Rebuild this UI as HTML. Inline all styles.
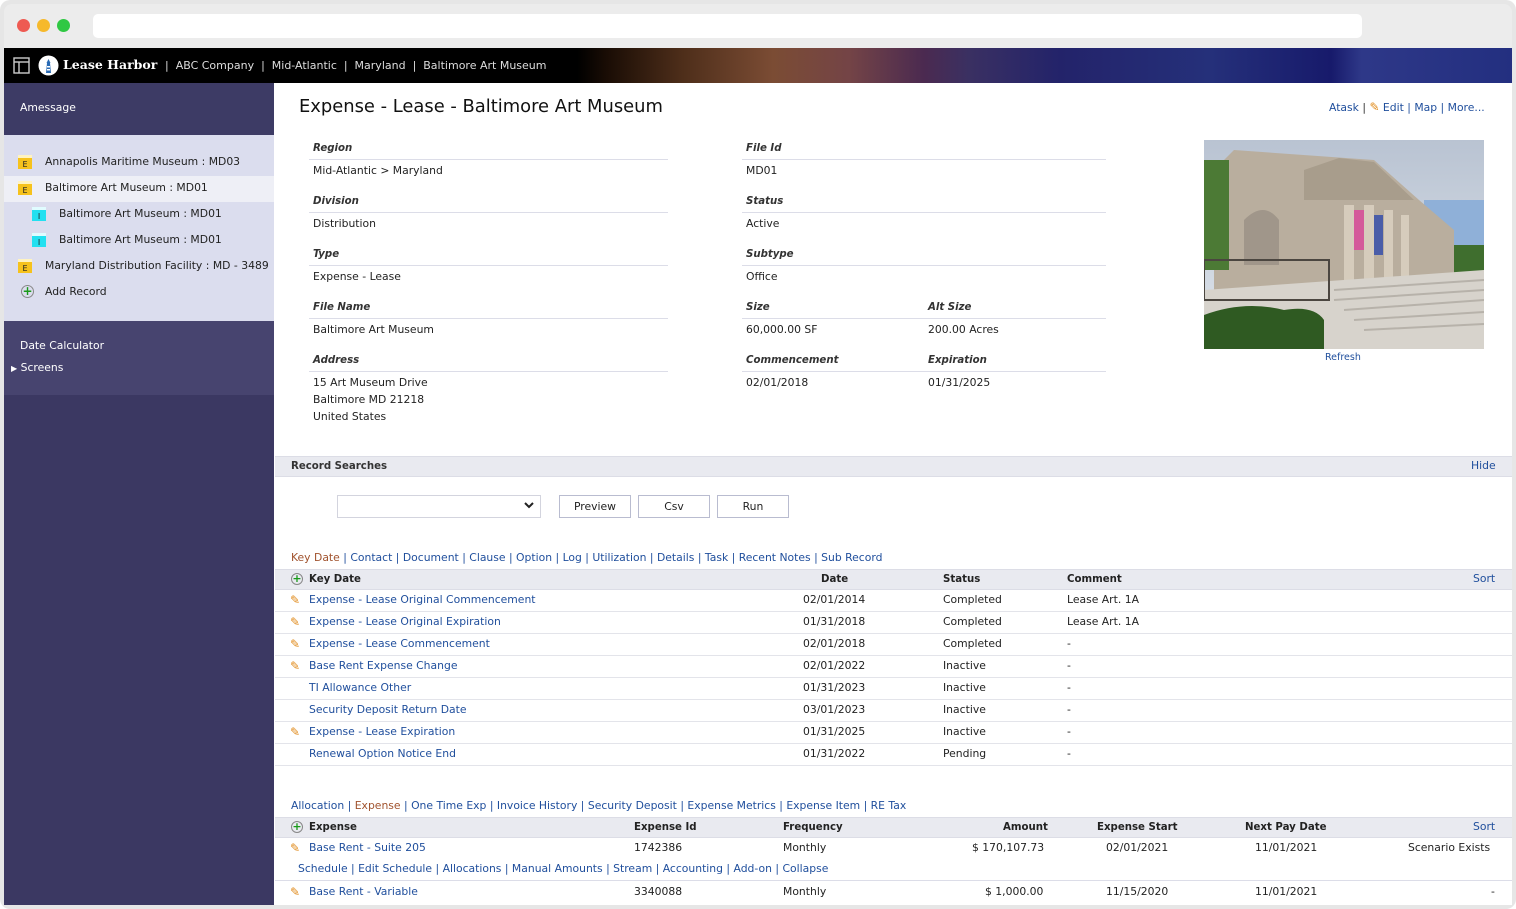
<!DOCTYPE html>
<html><head><meta charset="utf-8"><style>
*{margin:0;padding:0;box-sizing:border-box}
body{width:1516px;height:909px;background:#fff;font-family:"DejaVu Sans","Liberation Sans",sans-serif;font-size:10.8px;color:#222;position:relative;overflow:hidden}
.a{position:absolute;white-space:nowrap;line-height:16px}
.l{color:#1f4e9c}
.o{color:#a0522d}
.lbl{font-weight:bold;font-style:italic;font-size:10.2px;color:#333}
.hr{position:absolute;height:1px;background:#dcdde8}
.gbar{position:absolute;left:275px;width:1237px;background:#e9eaf0;border-top:1px solid #dcdde6;border-bottom:1px solid #dcdde6}
.row{position:absolute;left:275px;width:1237px;height:22px;border-bottom:1px solid #e3e4ea}
.btn{position:absolute;top:495px;height:23px;border:1px solid #b9bcd0;background:#fff;text-align:center;line-height:21px}
.pen{color:#e08a1a;font-size:12px}
</style></head><body>
<div class="a" style="left:0;top:0;width:1516px;height:909px;background:#e6e6e6;border-radius:10px"></div>
<div class="a" style="left:4px;top:4px;width:1508px;height:44px;background:#ececec;border-radius:8px 8px 0 0"></div>
<div class="a" style="left:274px;top:83px;width:1238px;height:822px;background:#fff"></div>
<div class="a" style="left:17px;top:19px;width:13px;height:13px;border-radius:50%;background:#ee5a52"></div>
<div class="a" style="left:37px;top:19px;width:13px;height:13px;border-radius:50%;background:#f6b92c"></div>
<div class="a" style="left:57px;top:19px;width:13px;height:13px;border-radius:50%;background:#2fc843"></div>
<div class="a" style="left:93px;top:14px;width:1269px;height:24px;background:#fff;border-radius:5px"></div>
<!-- header -->
<div class="a" style="left:4px;top:48px;width:1508px;height:35px;background:linear-gradient(90deg,#000 0%,#000 38%,#1a0d05 40%,#4e2e1a 45%,#7b4c34 51%,#744446 56%,#4b2a50 61%,#3a3062 64%,#23236a 70%,#25307a 80%,#171a6b 88%,#2e3888 90%,#232f80 100%)"></div>
<svg class="a" style="left:13px;top:57px" width="17" height="17" viewBox="0 0 17 17"><rect x="1" y="1" width="15" height="15" fill="none" stroke="#ccc" stroke-width="1.4"/><line x1="1" y1="5" x2="16" y2="5" stroke="#ccc" stroke-width="1.4"/><line x1="6" y1="5" x2="6" y2="16" stroke="#ccc" stroke-width="1.4"/></svg>
<svg class="a" style="left:38px;top:55px" width="21" height="21" viewBox="0 0 21 21"><circle cx="10.5" cy="10.5" r="10" fill="#fff"/><path d="M8 18 L9 8 L12 8 L13 18 Z M8.5 8 L10.5 4 L12.5 8 Z" fill="#2a6bb5"/><rect x="9" y="11" width="3" height="1.5" fill="#fff"/><rect x="9" y="14" width="3" height="1.5" fill="#fff"/></svg>
<div class="a" style="left:63px;top:57px;color:#fff;font-family:'DejaVu Serif',serif;font-weight:bold;font-size:12.5px">Lease Harbor</div>
<div class="a" style="left:165px;top:58px;color:#ddd;font-size:11px">|&nbsp;&nbsp;ABC Company&nbsp;&nbsp;|&nbsp;&nbsp;Mid-Atlantic&nbsp;&nbsp;|&nbsp;&nbsp;Maryland&nbsp;&nbsp;|&nbsp;&nbsp;Baltimore Art Museum</div>
<!-- sidebar -->
<div class="a" style="left:4px;top:83px;width:270px;height:822px;background:#3b3862"></div>
<div class="a" style="left:4px;top:83px;width:270px;height:52px;background:#3d3b65"></div>
<div class="a" style="left:20px;top:100px;color:#fff">Amessage</div>
<div class="a" style="left:4px;top:135px;width:270px;height:186px;background:#dbddee"></div>
<div class="a" style="left:4px;top:176px;width:270px;height:26px;background:#eeeff6"></div>
<div class="a" style="left:4px;top:321px;width:270px;height:74px;background:#47446f"></div>
<div class="a" style="left:20px;top:338px;color:#fff">Date Calculator</div>
<div class="a" style="left:11px;top:360px;color:#fff"><span style="font-size:8px">▶</span> Screens</div>
<div class="a" style="left:18px;top:155px;width:14px;height:14px;background:#f6c21c;font-size:8px;text-align:center;line-height:13px;border-top:3px solid #fff3c0">E</div>
<div class="a" style="left:45px;top:154px">Annapolis Maritime Museum : MD03</div>
<div class="a" style="left:18px;top:181px;width:14px;height:14px;background:#f6c21c;font-size:8px;text-align:center;line-height:13px;border-top:3px solid #fff3c0">E</div>
<div class="a" style="left:45px;top:180px">Baltimore Art Museum : MD01</div>
<div class="a" style="left:32px;top:207px;width:14px;height:14px;background:#22e0f0;font-size:8px;text-align:center;line-height:13px;border-top:3px solid #e0fcff">I</div>
<div class="a" style="left:59px;top:206px">Baltimore Art Museum : MD01</div>
<div class="a" style="left:32px;top:233px;width:14px;height:14px;background:#22e0f0;font-size:8px;text-align:center;line-height:13px;border-top:3px solid #e0fcff">I</div>
<div class="a" style="left:59px;top:232px">Baltimore Art Museum : MD01</div>
<div class="a" style="left:18px;top:259px;width:14px;height:14px;background:#f6c21c;font-size:8px;text-align:center;line-height:13px;border-top:3px solid #fff3c0">E</div>
<div class="a" style="left:45px;top:258px">Maryland Distribution Facility : MD - 3489</div>
<div class="a" style="left:21px;top:285px;width:13px;height:13px;border:1px solid #888;border-radius:50%;color:#1a9a1a;font-size:12px;line-height:10px;text-align:center;font-weight:bold">+</div>
<div class="a" style="left:45px;top:284px">Add Record</div>
<!-- main -->
<div class="a" style="left:299px;top:96px;font-size:17.9px;line-height:22px;color:#111">Expense - Lease - Baltimore Art Museum</div>
<div class="a l" style="left:1329px;top:99px">Atask <span style="color:#333">|</span> <span class="pen">✎</span> Edit | Map | More...</div>
<div class="a lbl" style="left:313px;top:141px">Region</div><div class="hr" style="left:309px;top:159px;width:359px"></div><div class="a" style="left:313px;top:163px">Mid-Atlantic &gt; Maryland</div>
<div class="a lbl" style="left:313px;top:194px">Division</div><div class="hr" style="left:309px;top:212px;width:359px"></div><div class="a" style="left:313px;top:216px">Distribution</div>
<div class="a lbl" style="left:313px;top:247px">Type</div><div class="hr" style="left:309px;top:265px;width:359px"></div><div class="a" style="left:313px;top:269px">Expense - Lease</div>
<div class="a lbl" style="left:313px;top:300px">File Name</div><div class="hr" style="left:309px;top:318px;width:359px"></div><div class="a" style="left:313px;top:322px">Baltimore Art Museum</div>
<div class="a lbl" style="left:313px;top:353px">Address</div><div class="hr" style="left:309px;top:371px;width:359px"></div><div class="a" style="left:313px;top:374px;line-height:17px">15 Art Museum Drive<br>Baltimore MD 21218<br>United States</div>
<div class="a lbl" style="left:746px;top:141px">File Id</div><div class="hr" style="left:742px;top:159px;width:364px"></div><div class="a" style="left:746px;top:163px">MD01</div>
<div class="a lbl" style="left:746px;top:194px">Status</div><div class="hr" style="left:742px;top:212px;width:364px"></div><div class="a" style="left:746px;top:216px">Active</div>
<div class="a lbl" style="left:746px;top:247px">Subtype</div><div class="hr" style="left:742px;top:265px;width:364px"></div><div class="a" style="left:746px;top:269px">Office</div>
<div class="a lbl" style="left:746px;top:300px">Size</div><div class="a lbl" style="left:928px;top:300px">Alt Size</div><div class="hr" style="left:742px;top:318px;width:364px"></div><div class="a" style="left:746px;top:322px">60,000.00 SF</div><div class="a" style="left:928px;top:322px">200.00 Acres</div>
<div class="a lbl" style="left:746px;top:353px">Commencement</div><div class="a lbl" style="left:928px;top:353px">Expiration</div><div class="hr" style="left:742px;top:371px;width:364px"></div><div class="a" style="left:746px;top:375px">02/01/2018</div><div class="a" style="left:928px;top:375px">01/31/2025</div>
<svg class="a" style="left:1204px;top:140px" width="280" height="209" viewBox="0 0 280 209">
<defs><linearGradient id="s" x1="0" y1="0" x2="0" y2="1"><stop offset="0" stop-color="#b9c3d2"/><stop offset="1" stop-color="#dfe5ec"/></linearGradient></defs>
<rect width="280" height="209" fill="url(#s)"/>
<rect x="220" y="60" width="60" height="55" fill="#8fb0d8"/>
<path d="M10 30 L30 10 L170 20 L215 60 L250 90 L250 150 L10 150Z" fill="#b9ae9e"/>
<path d="M100 30 L135 18 L170 22 L210 60 L100 60Z" fill="#a89d8c"/>
<rect x="140" y="65" width="10" height="80" fill="#d6ccbc"/><rect x="160" y="65" width="10" height="80" fill="#d6ccbc"/><rect x="180" y="70" width="9" height="75" fill="#d6ccbc"/><rect x="197" y="75" width="8" height="70" fill="#d6ccbc"/>
<rect x="150" y="70" width="10" height="40" fill="#d45a9a"/><rect x="170" y="75" width="9" height="40" fill="#4a5da8"/>
<path d="M40 80 Q60 60 75 80 L75 125 L40 125Z" fill="#a0968a"/>
<rect x="0" y="20" width="25" height="110" fill="#4c7a35"/>
<rect x="250" y="105" width="30" height="50" fill="#3f6e2e"/>
<path d="M0 150 L280 130 L280 209 L0 209Z" fill="#d7d3cc"/>
<path d="M130 150 L280 140 M130 160 L280 150 M140 170 L280 160 M150 180 L280 172 M160 190 L280 184" stroke="#b7b2aa" stroke-width="2"/>
<rect x="0" y="120" width="125" height="40" fill="none" stroke="#4b4640" stroke-width="2"/>
<path d="M0 175 Q40 160 80 170 Q110 165 120 180 L120 209 L0 209Z" fill="#2f5a22"/>
</svg>
<div class="a l" style="left:1325px;top:350px;font-size:9.5px">Refresh</div>
<!-- record searches -->
<div class="gbar" style="top:456px;height:21px"></div>
<div class="a" style="left:291px;top:459px;font-weight:bold;font-size:10.2px;color:#333">Record Searches</div>
<div class="a l" style="left:1471px;top:458px">Hide</div>
<div class="a" style="left:337px;top:495px;width:204px;height:23px;border:1px solid #d3d4de;background:#fff"></div>
<svg class="a" style="left:524px;top:502px" width="10" height="7"><path d="M1 1 L5 5 L9 1" stroke="#222" stroke-width="2" fill="none"/></svg>
<div class="btn" style="left:559px;width:72px">Preview</div>
<div class="btn" style="left:638px;width:72px">Csv</div>
<div class="btn" style="left:717px;width:72px">Run</div>
<div class="a l" style="left:291px;top:550px"><span class="o">Key Date</span> | Contact | Document | Clause | Option | Log | Utilization | Details | Task | Recent Notes | Sub Record</div>
<div class="gbar" style="top:569px;height:21px"></div>
<div class="a" style="left:291px;top:573px;width:12px;height:12px;border:1px solid #888;border-radius:50%;color:#1a9a1a;font-size:11px;line-height:10px;text-align:center;font-weight:bold">+</div>
<div class="a" style="left:309px;top:572px;font-weight:bold;font-size:10.2px">Key Date</div>
<div class="a" style="left:821px;top:572px;font-weight:bold;font-size:10.2px">Date</div>
<div class="a" style="left:943px;top:572px;font-weight:bold;font-size:10.2px">Status</div>
<div class="a" style="left:1067px;top:572px;font-weight:bold;font-size:10.2px">Comment</div>
<div class="a l" style="left:1473px;top:571px">Sort</div>
<div class="row" style="top:590px"></div><div class="row" style="top:612px"></div><div class="row" style="top:634px"></div><div class="row" style="top:656px"></div><div class="row" style="top:678px"></div><div class="row" style="top:700px"></div><div class="row" style="top:722px"></div><div class="row" style="top:744px"></div>
<div class="a pen" style="left:290px;top:592px">✎</div><div class="a l" style="left:309px;top:592px">Expense - Lease Original Commencement</div><div class="a" style="left:803px;top:592px">02/01/2014</div><div class="a" style="left:943px;top:592px">Completed</div><div class="a" style="left:1067px;top:592px">Lease Art. 1A</div>
<div class="a pen" style="left:290px;top:614px">✎</div><div class="a l" style="left:309px;top:614px">Expense - Lease Original Expiration</div><div class="a" style="left:803px;top:614px">01/31/2018</div><div class="a" style="left:943px;top:614px">Completed</div><div class="a" style="left:1067px;top:614px">Lease Art. 1A</div>
<div class="a pen" style="left:290px;top:636px">✎</div><div class="a l" style="left:309px;top:636px">Expense - Lease Commencement</div><div class="a" style="left:803px;top:636px">02/01/2018</div><div class="a" style="left:943px;top:636px">Completed</div><div class="a" style="left:1067px;top:636px">-</div>
<div class="a pen" style="left:290px;top:658px">✎</div><div class="a l" style="left:309px;top:658px">Base Rent Expense Change</div><div class="a" style="left:803px;top:658px">02/01/2022</div><div class="a" style="left:943px;top:658px">Inactive</div><div class="a" style="left:1067px;top:658px">-</div>
<div class="a l" style="left:309px;top:680px">TI Allowance Other</div><div class="a" style="left:803px;top:680px">01/31/2023</div><div class="a" style="left:943px;top:680px">Inactive</div><div class="a" style="left:1067px;top:680px">-</div>
<div class="a l" style="left:309px;top:702px">Security Deposit Return Date</div><div class="a" style="left:803px;top:702px">03/01/2023</div><div class="a" style="left:943px;top:702px">Inactive</div><div class="a" style="left:1067px;top:702px">-</div>
<div class="a pen" style="left:290px;top:724px">✎</div><div class="a l" style="left:309px;top:724px">Expense - Lease Expiration</div><div class="a" style="left:803px;top:724px">01/31/2025</div><div class="a" style="left:943px;top:724px">Inactive</div><div class="a" style="left:1067px;top:724px">-</div>
<div class="a l" style="left:309px;top:746px">Renewal Option Notice End</div><div class="a" style="left:803px;top:746px">01/31/2022</div><div class="a" style="left:943px;top:746px">Pending</div><div class="a" style="left:1067px;top:746px">-</div>
<!-- expense -->
<div class="a l" style="left:291px;top:798px">Allocation | <span class="o">Expense</span> | One Time Exp | Invoice History | Security Deposit | Expense Metrics | Expense Item | RE Tax</div>
<div class="gbar" style="top:817px;height:21px"></div>
<div class="a" style="left:291px;top:821px;width:12px;height:12px;border:1px solid #888;border-radius:50%;color:#1a9a1a;font-size:11px;line-height:10px;text-align:center;font-weight:bold">+</div>
<div class="a" style="left:309px;top:820px;font-weight:bold;font-size:10.2px">Expense</div>
<div class="a" style="left:634px;top:820px;font-weight:bold;font-size:10.2px">Expense Id</div>
<div class="a" style="left:783px;top:820px;font-weight:bold;font-size:10.2px">Frequency</div>
<div class="a" style="left:1003px;top:820px;font-weight:bold;font-size:10.2px">Amount</div>
<div class="a" style="left:1097px;top:820px;font-weight:bold;font-size:10.2px">Expense Start</div>
<div class="a" style="left:1245px;top:820px;font-weight:bold;font-size:10.2px">Next Pay Date</div>
<div class="a l" style="left:1473px;top:819px">Sort</div>
<div class="a pen" style="left:290px;top:840px">✎</div><div class="a l" style="left:309px;top:840px">Base Rent - Suite 205</div><div class="a" style="left:634px;top:840px">1742386</div><div class="a" style="left:783px;top:840px">Monthly</div><div class="a" style="left:972px;top:840px">$ 170,107.73</div><div class="a" style="left:1106px;top:840px">02/01/2021</div><div class="a" style="left:1255px;top:840px">11/01/2021</div><div class="a" style="left:1408px;top:840px">Scenario Exists</div>
<div class="a l" style="left:298px;top:861px">Schedule | Edit Schedule | Allocations | Manual Amounts | Stream | Accounting | Add-on | Collapse</div>
<div class="hr" style="left:275px;top:880px;width:1237px"></div>
<div class="a pen" style="left:290px;top:884px">✎</div><div class="a l" style="left:309px;top:884px">Base Rent - Variable</div><div class="a" style="left:634px;top:884px">3340088</div><div class="a" style="left:783px;top:884px">Monthly</div><div class="a" style="left:985px;top:884px">$ 1,000.00</div><div class="a" style="left:1106px;top:884px">11/15/2020</div><div class="a" style="left:1255px;top:884px">11/01/2021</div><div class="a" style="left:1491px;top:884px">-</div>
</body></html>
